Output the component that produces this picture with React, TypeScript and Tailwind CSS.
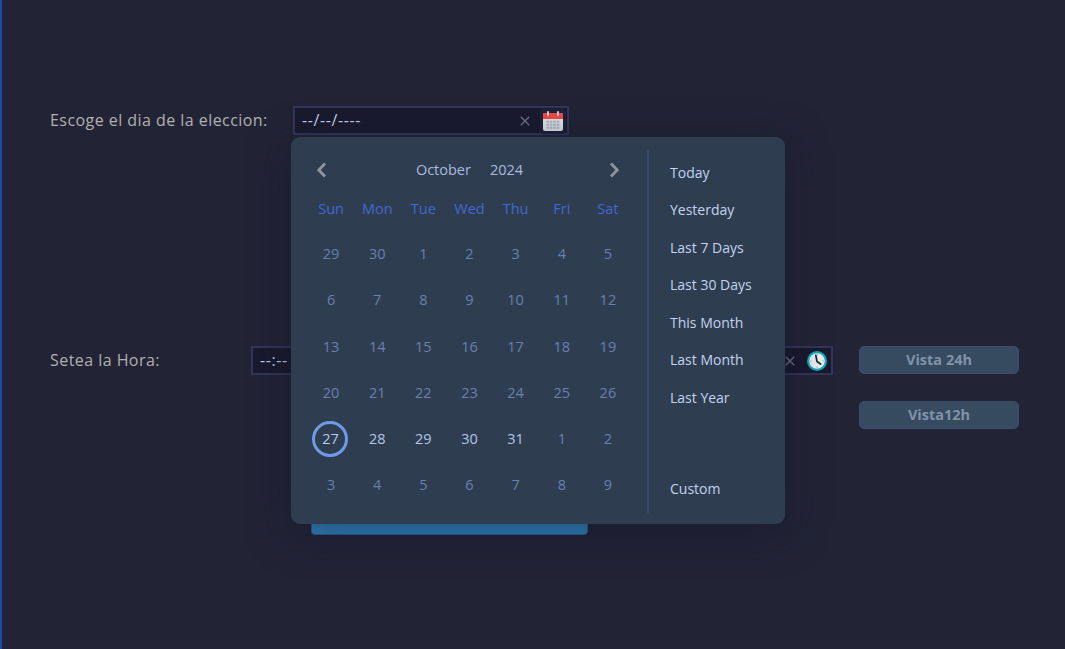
import React from "react";

const weeks = [
  [29, 30, 1, 2, 3, 4, 5],
  [6, 7, 8, 9, 10, 11, 12],
  [13, 14, 15, 16, 17, 18, 19],
  [20, 21, 22, 23, 24, 25, 26],
  [27, 28, 29, 30, 31, 1, 2],
  [3, 4, 5, 6, 7, 8, 9],
];
const days = ["Sun", "Mon", "Tue", "Wed", "Thu", "Fri", "Sat"];
const presets = ["Today", "Yesterday", "Last 7 Days", "Last 30 Days", "This Month", "Last Month", "Last Year"];

function X() {
  return (
    <svg width="10" height="10" viewBox="0 0 10 10" className="shrink-0">
      <path d="M0.8 0.8 9.2 9.2M9.2 0.8 0.8 9.2" stroke="#70748a" strokeWidth="1.3" />
    </svg>
  );
}

function CalendarIcon() {
  return (
    <svg width="22" height="22" viewBox="0 0 22 22" className="shrink-0">
      <rect x="1" y="3" width="20" height="18" rx="2" fill="#dfe3e6" />
      <path d="M1 9V5a2 2 0 0 1 2-2h16a2 2 0 0 1 2 2v4z" fill="#ee4b45" />
      <rect x="5" y="1" width="2" height="5" rx="1" fill="#c9ced3" />
      <rect x="15" y="1" width="2" height="5" rx="1" fill="#c9ced3" />
      {[0, 1, 2].map((r) =>
        [0, 1, 2, 3].map((c) => <rect key={`${r}-${c}`} x={4.5 + c * 3.4} y={10.6 + r * 3} width="2.6" height="2.2" fill="#aeb9c4" />)
      )}
    </svg>
  );
}

function ClockIcon() {
  return (
    <svg width="22" height="22" viewBox="0 0 22 22" className="shrink-0">
      <circle cx="11" cy="11" r="10" fill="#11a9bb" />
      <circle cx="11" cy="11" r="7.8" fill="#e9eef0" />
      <path d="M11 4.4v1M11 16.6v1M4.4 11h1M16.6 11h1" stroke="#8a98a2" strokeWidth="1" />
      <path d="M9.8 5.4 11 11.4 14.6 14" fill="none" stroke="#1b2430" strokeWidth="1.7" strokeLinecap="round" />
    </svg>
  );
}

function Chevron({ dir }: { dir: "l" | "r" }) {
  return (
    <svg width="11" height="16" viewBox="0 0 11 16">
      <path d={dir === "l" ? "M9 1.5 2.8 8 9 14.5" : "M2 1.5 8.2 8 2 14.5"} fill="none" stroke="#8f959c" strokeWidth="2.8" />
    </svg>
  );
}

function Btn({ label }: { label: string }) {
  return (
    <button className="h-[28px] w-[160px] rounded-[5px] border border-[#3e4b70] bg-[#364a60] text-[14.5px] font-bold text-[#8093a8]">
      {label}
    </button>
  );
}

export default function App() {
  return (
    <div
      className="relative h-[649px] w-[1065px] overflow-hidden border-l-2 border-[#1c4ba6] bg-[#222436] pl-[48px] pt-[106px] text-[14.5px] text-[#b0b0b0]"
      style={{ fontFamily: '"Open Sans", "Noto Sans", sans-serif' }}
    >
      <div className="flex h-[29px] items-center">
        <span className="w-[243px] pb-[2px] text-[16px] tracking-[0.45px]">Escoge el dia de la eleccion:</span>
        <div className="flex h-[29px] w-[276px] items-center border-2 border-[#33355a] bg-[#191a2e] pl-[7px] pr-[1px] text-[#c4d2ee]">
          <span className="flex-1 pb-[2px] text-[16px] tracking-[0.6px]">--/--/----</span>
          <X />
          <span className="ml-[10px] rounded-[4px] bg-[#1f2138] p-[2px]"><CalendarIcon /></span>
        </div>
      </div>

      <div className="mt-[211px] flex items-start">
        <span className="flex h-[29px] w-[201px] items-center pb-[2px] text-[16px] tracking-[0.45px]">Setea la Hora:</span>
        <div className="flex h-[29px] w-[582px] items-center border-2 border-[#33355a] bg-[#191a2e] pl-[7px] pr-[3px] text-[#c4d2ee]">
          <span className="flex-1 pb-[2px] text-[16px] tracking-[0.6px]">--:--</span>
          <X />
          <span className="ml-[11px]"><ClockIcon /></span>
        </div>
        <div className="ml-[26px] flex flex-col gap-[27px]">
          <Btn label="Vista 24h" />
          <Btn label="Vista12h" />
        </div>
      </div>

      <div className="ml-[261px] mt-[78px] h-[28px] w-[277px] rounded-[4px] border border-[#2f5f8f] bg-[#3088c6]" />

      <div className="absolute left-[289px] top-[137px] flex h-[387px] w-[494px] rounded-[9px] bg-[#2e3e50] pl-[17px] pt-[13px] shadow-[0_8px_40px_rgba(20,20,40,0.55)]">
        <div className="w-[323px]">
          <div className="flex h-[40px] items-center justify-between pl-[8px] pr-[11px]">
            <Chevron dir="l" />
            <div className="ml-[3px] flex gap-[19px] text-[#aab9dc]">
              <span>October</span>
              <span>2024</span>
            </div>
            <Chevron dir="r" />
          </div>
          <div className="grid h-[38px] grid-cols-7 items-center text-center text-[#4268d2]">
            {days.map((d) => (
              <span key={d}>{d}</span>
            ))}
          </div>
          <div className="mt-[3px] grid grid-cols-7 grid-rows-[repeat(6,46.2px)] items-center justify-items-center text-[#6a7fb0]">
            {weeks.flatMap((w, i) =>
              w.map((d, j) => {
                const bright = i === 4 && j >= 1 && j <= 4;
                const sel = i === 4 && j === 0;
                return (
                  <span
                    key={`${i}-${j}`}
                    className={
                      sel
                        ? "-ml-[2px] flex h-[36px] w-[36px] items-center justify-center rounded-full border-[3px] border-[#6f9ae8] pl-[1px] text-[#b7c8ea]"
                        : bright
                        ? "text-[#b4c4e6]"
                        : ""
                    }
                  >
                    {d}
                  </span>
                );
              })
            )}
          </div>
        </div>
        <div className="relative mb-[11px] ml-[16px] flex-1 border-l-2 border-[#3a4a6c] pl-[21px] text-[14px] text-[#c3d2ee]">
          <div className="flex h-full flex-col pt-[3.5px]">
            {presets.map((p) => (
              <span key={p} className="flex h-[37.5px] shrink-0 items-center">
                {p}
              </span>
            ))}
            <span className="mt-[53.5px] flex h-[37.5px] items-center">Custom</span>
          </div>
        </div>
      </div>
    </div>
  );
}
